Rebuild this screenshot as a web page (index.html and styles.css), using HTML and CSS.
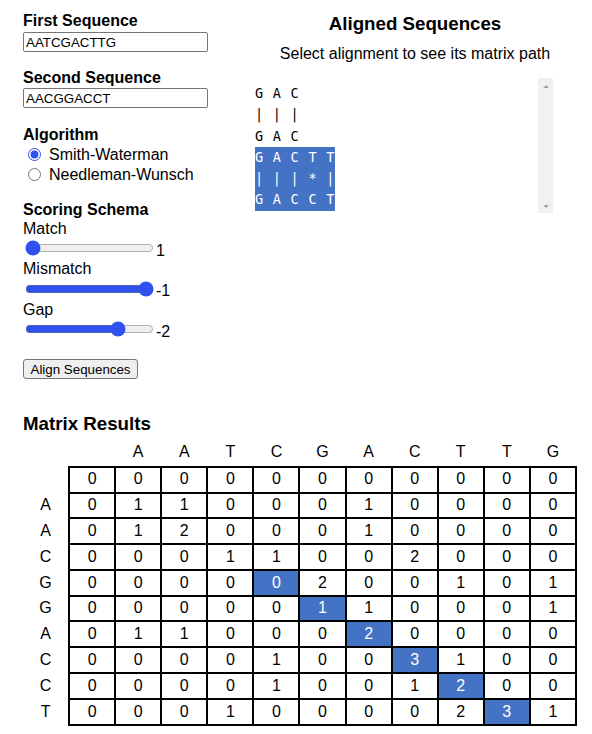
FILE: index.html
```html
<!DOCTYPE html>
<html>
<head>
<meta charset="utf-8">
<link rel="stylesheet" href="styles.css">
</head>
<body>
<div class="page">
  <div class="top">
    <div class="controls">
      <label class="field-label" for="seq1">First Sequence</label>
      <input id="seq1" class="seq-input first-input" type="text" value="AATCGACTTG">
      <label class="field-label second-label" for="seq2">Second Sequence</label>
      <input id="seq2" class="seq-input second-input" type="text" value="AACGGACCT">
      <div class="field-label algo-label">Algorithm</div>
      <label class="radio-row"><input type="radio" name="algo" checked> Smith-Waterman</label>
      <label class="radio-row"><input type="radio" name="algo"> Needleman-Wunsch</label>
      <div class="field-label scoring-label">Scoring Schema</div>
      <div class="slider-label">Match</div>
      <div class="slider-row"><input type="range" min="1" max="5" value="1"><span class="val">1</span></div>
      <div class="slider-label">Mismatch</div>
      <div class="slider-row"><input type="range" min="-5" max="-1" value="-1"><span class="val">-1</span></div>
      <div class="slider-label">Gap</div>
      <div class="slider-row"><input type="range" min="-5" max="-1" value="-2"><span class="val">-2</span></div>
      <button class="align-btn" type="button">Align Sequences</button>
    </div>
    <div class="results">
      <h3 class="title">Aligned Sequences</h3>
      <p class="hint">Select alignment to see its matrix path</p>
      <div class="align-box">
        <div class="align-list">
          <div class="alignment"><div>G A C</div><div>| | |</div><div>G A C</div></div>
          <div class="alignment selected"><div>G A C T T</div><div>| | | * |</div><div>G A C C T</div></div>
        </div>
        <div class="scrollbar"><span class="arrow-up"></span><span class="arrow-down"></span></div>
      </div>
    </div>
  </div>
  <h3 class="matrix-title">Matrix Results</h3>
  <table class="matrix">
    <tr class="head"><td></td><td></td><td>A</td><td>A</td><td>T</td><td>C</td><td>G</td><td>A</td><td>C</td><td>T</td><td>T</td><td>G</td></tr>
    <tr><td class="rl"></td><td>0</td><td>0</td><td>0</td><td>0</td><td>0</td><td>0</td><td>0</td><td>0</td><td>0</td><td>0</td><td>0</td></tr>
    <tr><td class="rl">A</td><td>0</td><td>1</td><td>1</td><td>0</td><td>0</td><td>0</td><td>1</td><td>0</td><td>0</td><td>0</td><td>0</td></tr>
    <tr><td class="rl">A</td><td>0</td><td>1</td><td>2</td><td>0</td><td>0</td><td>0</td><td>1</td><td>0</td><td>0</td><td>0</td><td>0</td></tr>
    <tr><td class="rl">C</td><td>0</td><td>0</td><td>0</td><td>1</td><td>1</td><td>0</td><td>0</td><td>2</td><td>0</td><td>0</td><td>0</td></tr>
    <tr><td class="rl">G</td><td>0</td><td>0</td><td>0</td><td>0</td><td class="hl">0</td><td>2</td><td>0</td><td>0</td><td>1</td><td>0</td><td>1</td></tr>
    <tr><td class="rl">G</td><td>0</td><td>0</td><td>0</td><td>0</td><td>0</td><td class="hl">1</td><td>1</td><td>0</td><td>0</td><td>0</td><td>1</td></tr>
    <tr><td class="rl">A</td><td>0</td><td>1</td><td>1</td><td>0</td><td>0</td><td>0</td><td class="hl">2</td><td>0</td><td>0</td><td>0</td><td>0</td></tr>
    <tr><td class="rl">C</td><td>0</td><td>0</td><td>0</td><td>0</td><td>1</td><td>0</td><td>0</td><td class="hl">3</td><td>1</td><td>0</td><td>0</td></tr>
    <tr><td class="rl">C</td><td>0</td><td>0</td><td>0</td><td>0</td><td>1</td><td>0</td><td>0</td><td>1</td><td class="hl">2</td><td>0</td><td>0</td></tr>
    <tr><td class="rl">T</td><td>0</td><td>0</td><td>0</td><td>1</td><td>0</td><td>0</td><td>0</td><td>0</td><td>2</td><td class="hl">3</td><td>1</td></tr>
  </table>
</div>
</body>
</html>
```
FILE: styles.css
```css
html, body {
  margin: 0;
  padding: 0;
  background: #fff;
}
body {
  font-family: "Liberation Sans", Arial, sans-serif;
  font-size: 16px;
  color: #000;
}
.page {
  padding: 12px 0 0 23px;
}
.top {
  display: grid;
  grid-template-columns: 232px 320px;
  align-items: start;
}
.controls {
  display: flex;
  flex-direction: column;
  align-items: flex-start;
  accent-color: #2f52ef;
}
.field-label {
  display: block;
  font-weight: bold;
  line-height: 18.4px;
}
.seq-input {
  box-sizing: border-box;
  width: 185px;
  height: 20px;
  margin: 0;
  padding: 0 2px;
  border: 1px solid #767676;
  border-radius: 2px;
  font-family: "Liberation Sans", Arial, sans-serif;
  font-size: 13.333px;
  color: #000;
  background: #fff;
}
.first-input { margin-top: 1.6px; }
.second-label { margin-top: 16.5px; }
.second-input { margin-top: 1.4px; }
.algo-label { margin-top: 18.2px; }
.radio-row {
  display: flex;
  align-items: center;
  height: 20px;
  line-height: 18.4px;
}
.radio-row input {
  width: 13px;
  height: 13px;
  margin: 0 8px 0 5px;
}
.scoring-label { margin-top: 16.5px; }
.slider-label {
  line-height: 18.4px;
}
.slider-row {
  display: flex;
  align-items: flex-start;
  height: 22px;
}
.slider-row input {
  width: 129px;
  height: 16px;
  margin: 2px;
}
.val {
  line-height: 18.4px;
  margin-top: 3.5px;
}
.align-btn {
  margin-top: 18px;
  height: 20px;
  padding: 0 6.5px;
  border: 1px solid #767676;
  border-radius: 3px;
  background: #efefef;
  font-family: "Liberation Sans", Arial, sans-serif;
  font-size: 13.333px;
  color: #000;
}
.results {
  padding-top: 1px;
}
.title {
  margin: 0;
  font-size: 18.72px;
  line-height: 21.5px;
  text-align: center;
}
.hint {
  margin: 10px 0 0;
  line-height: 18.4px;
  text-align: center;
}
.align-box {
  display: flex;
  width: 298px;
  height: 135px;
  margin-top: 15.1px;
}
.align-list {
  flex: 1;
  overflow: hidden;
  padding-top: 5px;
  font-family: "DejaVu Sans Mono", monospace;
  font-size: 13.5px;
  letter-spacing: 0.77px;
  line-height: 21.3px;
}
.alignment {
  width: fit-content;
  white-space: pre;
  color: #000;
}
.alignment.selected {
  background: #4472c4;
  color: #fff;
}
.scrollbar {
  width: 15px;
  background: #f1f1f1;
  display: flex;
  flex-direction: column;
  justify-content: space-between;
  align-items: center;
  padding: 7px 0 5px;
  box-sizing: border-box;
}
.arrow-up {
  width: 0;
  height: 0;
  border-left: 3.5px solid transparent;
  border-right: 3.5px solid transparent;
  border-bottom: 3.5px solid #a3a3a3;
}
.arrow-down {
  width: 0;
  height: 0;
  border-left: 3.5px solid transparent;
  border-right: 3.5px solid transparent;
  border-top: 3.5px solid #a3a3a3;
}
.matrix-title {
  margin: 34px 0 5.5px;
  font-size: 18.72px;
  line-height: 21.5px;
}
.matrix {
  border-collapse: collapse;
  table-layout: fixed;
  width: 554px;
}
.matrix td {
  border: 2px solid #000;
  padding: 2.7px 0;
  line-height: 18.4px;
  text-align: center;
  vertical-align: middle;
}
.matrix tr.head td {
  border: none;
  padding: 2.7px 0 4.7px;
}
.matrix td.rl {
  border: none;
}
.matrix td.hl {
  background: #4472c4;
  color: #fff;
}
```
